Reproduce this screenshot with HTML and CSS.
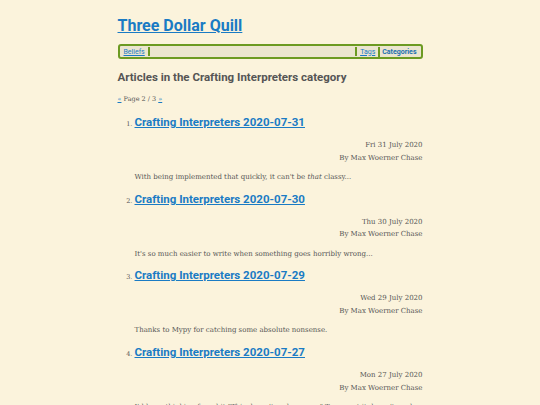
FILE: index.html
```html
<!DOCTYPE html>
<html>
<head>
<meta charset="utf-8">
<link rel="stylesheet" href="styles.css">
</head>
<body>
<div class="page">
  <h1 class="site-title"><a href="#">Three Dollar Quill</a></h1>
  <nav class="nav">
    <a class="nav-link" href="#">Beliefs</a>
    <span class="nav-fill"></span>
    <a class="nav-link" href="#">Tags</a>
    <a class="nav-link current" href="#">Categories</a>
  </nav>
  <h2 class="cat-title">Articles in the Crafting Interpreters category</h2>
  <p class="pager"><a href="#">«</a> Page 2 / 3 <a href="#">»</a></p>
  <ol class="articles" start="1">
    <li class="article">
      <h3 class="art-title"><a href="#">Crafting Interpreters 2020-07-31</a></h3>
      <div class="meta"><div>Fri 31 July 2020</div><div>By Max Woerner Chase</div></div>
      <p class="summary">With being implemented that quickly, it can't be <em>that</em> classy...</p>
    </li>
    <li class="article">
      <h3 class="art-title"><a href="#">Crafting Interpreters 2020-07-30</a></h3>
      <div class="meta"><div>Thu 30 July 2020</div><div>By Max Woerner Chase</div></div>
      <p class="summary">It's so much easier to write when something goes horribly wrong...</p>
    </li>
    <li class="article">
      <h3 class="art-title"><a href="#">Crafting Interpreters 2020-07-29</a></h3>
      <div class="meta"><div>Wed 29 July 2020</div><div>By Max Woerner Chase</div></div>
      <p class="summary">Thanks to Mypy for catching some absolute nonsense.</p>
    </li>
    <li class="article">
      <h3 class="art-title"><a href="#">Crafting Interpreters 2020-07-27</a></h3>
      <div class="meta"><div>Mon 27 July 2020</div><div>By Max Woerner Chase</div></div>
      <p class="summary">I'd been thinking for a bit "This doesn't make sense." Turns out it doesn't, and the...</p>
    </li>
  </ol>
</div>
</body>
</html>
```
FILE: styles.css
```css
html, body {
  margin: 0;
  padding: 0;
  background: #fbf3dc;
}
body {
  font-family: "DejaVu Serif", serif;
  color: #555;
  overflow: hidden;
  height: 405px;
}
.page {
  width: 305px;
  margin: 0 auto;
  padding-top: 14px;
}
a { color: #1a7bc4; }
.site-title {
  font-family: Roboto, sans-serif;
  font-size: 16px;
  font-weight: 700;
  margin: 0 0 6px 0;
  line-height: 24px;
}
.nav {
  display: flex;
  align-items: center;
  border: 2px solid #6c9a22;
  border-radius: 3px;
  background: #ebe5cf;
  height: 11px;
  padding: 0 2px;
  font-family: Roboto, sans-serif;
  font-size: 7px;
}
.nav-link {
  padding: 0 2px;
  line-height: 10px;
}
.nav-fill {
  flex: 1;
  align-self: stretch;
  margin: 1px 1px;
  border-left: 2px solid #6c9a22;
  border-right: 2px solid #6c9a22;
}
.nav-link.current {
  font-weight: 700;
  border-left: 2px solid #6c9a22;
  margin-left: 1px;
  text-decoration: none;
  color: #1a6fb0;
}
.cat-title {
  font-family: Roboto, sans-serif;
  font-size: 11.5px;
  font-weight: 700;
  color: #555;
  margin: 10px 0 0 0;
  line-height: 16px;
}
.pager {
  font-size: 6.5px;
  margin: 9px 0 0 0;
  line-height: 10px;
}
.articles {
  margin: 9px 0 0 0;
  padding-left: 17px;
  font-size: 6.5px;
}
.article {
  margin: 0;
  height: 76.7px;
}
.art-title {
  font-family: Roboto, sans-serif;
  font-size: 11.5px;
  font-weight: 700;
  margin: 0;
  line-height: 18px;
}
.meta {
  text-align: right;
  font-size: 7px;
  line-height: 12.5px;
  margin-top: 8px;
}
.summary {
  font-size: 7px;
  margin: 7px 0 0 0;
  line-height: 12px;
}
```
